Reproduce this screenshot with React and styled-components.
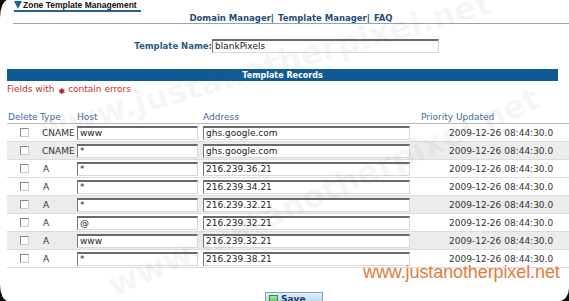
import React from 'react';
import styled, { createGlobalStyle } from 'styled-components';

const Global = createGlobalStyle`
  html, body { margin: 0; padding: 0; background: #fff; }
  body { font-family: "DejaVu Sans", Verdana, sans-serif; }
`;

const Page = styled.div`
  position: relative;
  width: 569px;
  height: 301px;
  overflow: hidden;
  background: #fff;
  font-family: "DejaVu Sans", Verdana, sans-serif;
  font-size: 9px;
  color: #333;
`;

const TitleBar = styled.div`
  display: flex;
  padding-left: 14px;
  height: 12px;
`;

const Title = styled.div`
  display: flex;
  align-items: center;
  gap: 1px;
  height: 10px;
  padding-right: 4px;
  border-bottom: 2px solid #2a5f8f;
  font-family: "Liberation Sans", Arial, sans-serif;
  font-weight: bold;
  font-size: 8.5px;
  color: #111;
`;

const Nav = styled.nav`
  margin-left: 13px;
  height: 11px;
  display: flex;
  justify-content: center;
  align-items: center;
  border-bottom: 1px solid #8ea6b8;
  font-weight: bold;
  font-size: 8.5px;
  color: #1f4d7a;
  gap: 4px;
`;

const NavLink = styled.span`
  white-space: nowrap;
`;

const NameRow = styled.div`
  display: flex;
  align-items: center;
  padding-left: 133px;
  margin-top: 15px;
  height: 14px;
`;

const Label = styled.label`
  font-weight: bold;
  font-size: 8.5px;
  color: #2a5a88;
  width: 79px;
  text-align: right;
  white-space: nowrap;
`;

const TextBox = styled.div`
  box-sizing: border-box;
  width: ${p => p.$w}px;
  height: 14px;
  background: #fff;
  border-top: 2px solid #6a6a6a;
  border-left: 1px solid #777;
  border-right: 1px solid #d8d8d8;
  border-bottom: 1px solid #d8d8d8;
  padding-left: 2px;
  font-size: 9px;
  line-height: 11px;
  color: #222;
  white-space: nowrap;
`;

const SectionBar = styled.div`
  margin: 16px 11px 0 7px;
  height: 12px;
  background: #0f5a94;
  color: #fff;
  font-weight: bold;
  font-size: 8px;
  display: flex;
  align-items: center;
  justify-content: center;
`;

const ErrorNote = styled.div`
  margin: 3px 0 0 7px;
  color: #cc2a3c;
  font-size: 9px;
  height: 10px;
  display: flex;
  align-items: center;
`;

const Star = styled.span`
  font-size: 8px;
  margin: 4px 3px 0 4px;
  color: #b01020;
`;

const Table = styled.div`
  margin: 17px 0 0 7px;
`;

const cols = '33px 36px 126px 219px 1fr';

const HeadRow = styled.div`
  display: grid;
  grid-template-columns: ${cols};
  height: 12px;
  align-items: center;
  border-bottom: 1px solid #b8b8b8;
  color: #3d6d9e;
  font-size: 9px;
`;

const HeadCell = styled.div`
  padding-left: ${p => p.$pl || 0}px;
  white-space: nowrap;
`;

const Row = styled.div`
  display: grid;
  grid-template-columns: ${cols};
  height: 17px;
  align-items: center;
  border-bottom: 1px solid #dcdcdc;
  background: ${p => (p.$shade ? '#ececec' : '#fff')};
`;

const Cell = styled.div`
  padding-left: ${p => p.$pl || 0}px;
  white-space: nowrap;
  color: #333;
  font-size: 9px;
`;

const Check = styled.span`
  display: block;
  margin-left: 13px;
  width: 7px;
  height: 7px;
  border: 1px solid #888;
  border-right-color: #ccc;
  border-bottom-color: #ccc;
  background: #fff;
`;

const SaveRow = styled.div`
  display: flex;
  padding-left: 265px;
  margin-top: 24px;
`;

const SaveButton = styled.button`
  display: inline-flex;
  align-items: center;
  gap: 3px;
  height: 14px;
  padding: 0 16px 0 3px;
  border: 1px solid #7f9fc6;
  background: linear-gradient(#e2effa, #b4d0ec);
  font-family: "DejaVu Sans", Verdana, sans-serif;
  font-weight: bold;
  font-size: 9px;
  color: #1b3b6c;
`;

const SaveIcon = styled.span`
  width: 7px;
  height: 7px;
  border: 1px solid #3b8a3a;
  background: linear-gradient(#a6e89a, #58bd4c);
`;

const Watermark = styled.div`
  position: absolute;
  left: ${p => p.$x}px;
  top: ${p => p.$y}px;
  transform: rotate(${p => p.$r}deg);
  transform-origin: left center;
  font-family: "DejaVu Sans", sans-serif;
  font-weight: bold;
  font-size: 32px;
  color: rgba(110, 110, 110, 0.065);
  white-space: nowrap;
  pointer-events: none;
`;

const Signature = styled.div`
  position: absolute;
  left: 363px;
  top: 262px;
  font-family: "Liberation Sans", sans-serif;
  font-size: 18px;
  letter-spacing: -0.1px;
  color: #e27b3b;
  white-space: nowrap;
  pointer-events: none;
`;

const Corner = styled.div`
  position: absolute;
  overflow: hidden;
  width: ${p => p.$w}px;
  height: ${p => p.$h}px;
  ${p => (p.$top ? 'top: 0;' : 'bottom: 0;')}
  ${p => (p.$left ? 'left: 0;' : 'right: 0;')}
  background: #0c0c0c;
  pointer-events: none;
  &::after {
    content: '';
    position: absolute;
    width: 200%;
    height: 200%;
    border-radius: 50%;
    background: #fff;
    ${p => (p.$top ? 'top: 0;' : 'bottom: 0;')}
    ${p => (p.$left ? 'left: 0;' : 'right: 0;')}
  }
`;

const records = [
  { type: 'CNAME', host: 'www', addr: 'ghs.google.com', shade: false },
  { type: 'CNAME', host: '*', addr: 'ghs.google.com', shade: true },
  { type: 'A', host: '*', addr: '216.239.36.21', shade: false },
  { type: 'A', host: '*', addr: '216.239.34.21', shade: false },
  { type: 'A', host: '*', addr: '216.239.32.21', shade: true },
  { type: 'A', host: '@', addr: '216.239.32.21', shade: false },
  { type: 'A', host: 'www', addr: '216.239.32.21', shade: true },
  { type: 'A', host: '*', addr: '216.239.38.21', shade: false },
];

export default function App() {
  return (
    <Page>
      <Global />
      <TitleBar>
        <Title>
          <svg width="8" height="8" viewBox="0 0 8 8">
            <path d="M0 0 H8 L4 8 Z" fill="#1f5f99" />
          </svg>
          Zone Template Management
        </Title>
      </TitleBar>
      <Nav>
        <NavLink>Domain Manager|</NavLink>
        <NavLink>Template Manager|</NavLink>
        <NavLink>FAQ</NavLink>
      </Nav>
      <NameRow>
        <Label>Template Name:</Label>
        <TextBox $w={227}>blankPixels</TextBox>
      </NameRow>
      <SectionBar>Template Records</SectionBar>
      <ErrorNote>
        Fields with<Star>✱</Star>contain errors
      </ErrorNote>
      <Table>
        <HeadRow>
          <HeadCell $pl={1}>Delete</HeadCell>
          <HeadCell>Type</HeadCell>
          <HeadCell $pl={1}>Host</HeadCell>
          <HeadCell $pl={1}>Address</HeadCell>
          <HeadCell $pl={0}>Priority Updated</HeadCell>
        </HeadRow>
        {records.map((r, i) => (
          <Row key={i} $shade={r.shade}>
            <Cell><Check /></Cell>
            <Cell $pl={r.type === 'A' ? 3 : 2}>{r.type}</Cell>
            <Cell $pl={1}><TextBox $w={121}>{r.host}</TextBox></Cell>
            <Cell $pl={1}><TextBox $w={207}>{r.addr}</TextBox></Cell>
            <Cell $pl={28}>2009-12-26 08:44:30.0</Cell>
          </Row>
        ))}
      </Table>
      <SaveRow>
        <SaveButton type="button"><SaveIcon />Save</SaveButton>
      </SaveRow>
      <Watermark $x={40} $y={112} $r={-16}>www.justanotherpixel.net</Watermark>
      <Watermark $x={110} $y={268} $r={-24}>www.justanotherpixel.net</Watermark>
      <Signature>www.justanotherpixel.net</Signature>
      <Corner $top $left $w={8} $h={18} />
      <Corner $left $w={8} $h={16} />
      <Corner $w={10} $h={13} />
    </Page>
  );
}
